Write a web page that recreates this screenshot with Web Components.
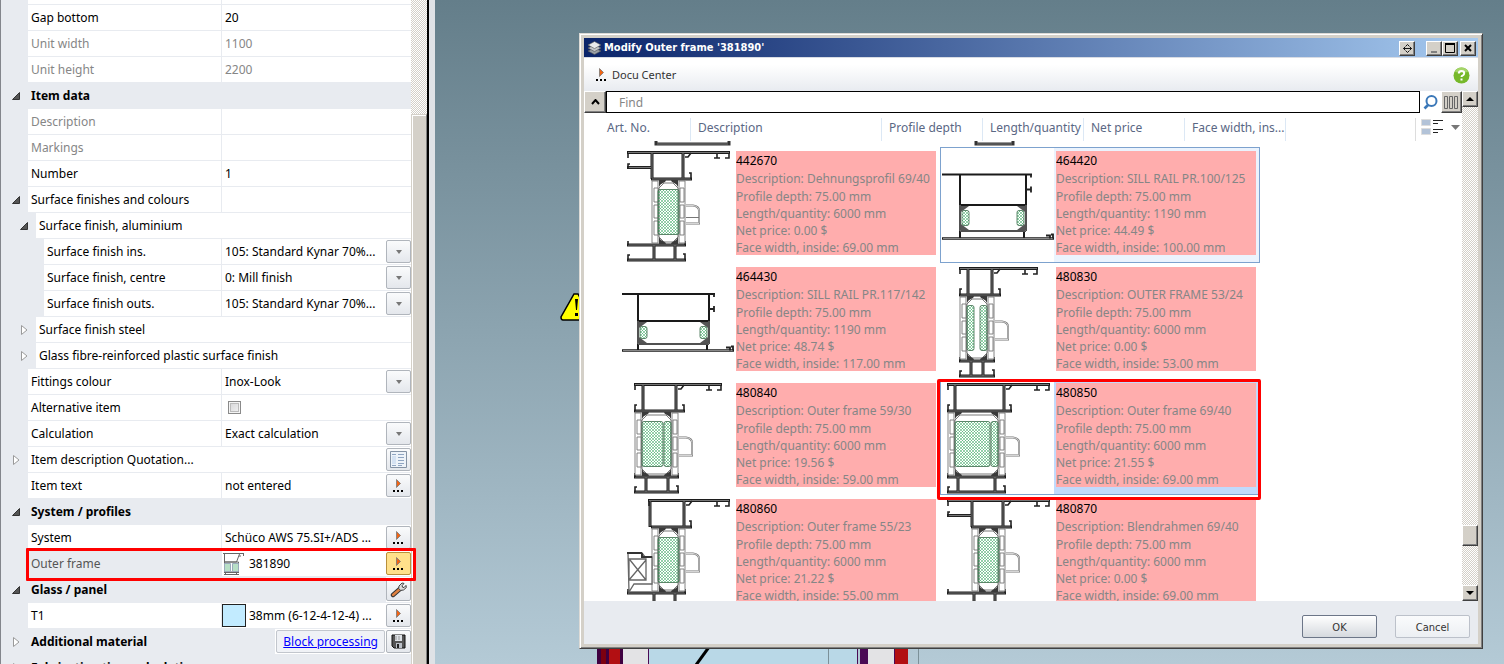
<!DOCTYPE html>
<html lang="en">
<head>
<meta charset="utf-8">
<title>Modify Outer frame</title>
<style>
html,body{margin:0;height:100%}
body{font:12px/16px "Noto Sans","Open Sans",sans-serif;color:#000;overflow:hidden;
--panel:#e8ebf0;--face:#d4d0c8;--dither:repeating-conic-gradient(#fff 0 25%,#d4d0c8 0 50%) 0 0/2px 2px}
</style>
</head>
<body>
<app-shell>
  <property-panel slot="side">
    <prop-row short type="text"></prop-row>
    <prop-row label="Gap bottom" type="text" value="20"></prop-row>
    <prop-row label="Unit width" type="text" value="1100" muted></prop-row>
    <prop-row label="Unit height" type="text" value="2200" muted></prop-row>
    <prop-row label="Item data" type="header" tree="open"></prop-row>
    <prop-row label="Description" type="text" muted></prop-row>
    <prop-row label="Markings" type="text" muted></prop-row>
    <prop-row label="Number" type="text" value="1"></prop-row>
    <prop-row label="Surface finishes and colours" type="cell" tree="open"></prop-row>
    <prop-row label="Surface finish, aluminium" type="group" tree="open" indent="1"></prop-row>
    <prop-row label="Surface finish ins." type="select" value="105: Standard Kynar 70%..." indent="2"></prop-row>
    <prop-row label="Surface finish, centre" type="select" value="0: Mill finish" indent="2"></prop-row>
    <prop-row label="Surface finish outs." type="select" value="105: Standard Kynar 70%..." indent="2"></prop-row>
    <prop-row label="Surface finish steel" type="group" tree="closed" indent="1"></prop-row>
    <prop-row label="Glass fibre-reinforced plastic surface finish" type="group" tree="closed" indent="1"></prop-row>
    <prop-row label="Fittings colour" type="select" value="Inox-Look"></prop-row>
    <prop-row label="Alternative item" type="check"></prop-row>
    <prop-row label="Calculation" type="select" value="Exact calculation"></prop-row>
    <prop-row label="Item description Quotation..." type="group" tree="closed"><icon-button slot="actions" icon="form" label="Edit quotation text"></icon-button></prop-row>
    <prop-row label="Item text" type="cell" value="not entered"><icon-button slot="actions" icon="more" label="Open item text"></icon-button></prop-row>
    <prop-row label="System / profiles" type="header" tree="open"></prop-row>
    <prop-row label="System" type="cell" value="Schüco AWS 75.SI+/ADS ..."><icon-button slot="actions" icon="more" label="Choose system"></icon-button></prop-row>
    <prop-row label="Outer frame" type="cell" value="381890" current>
      <mini-profile slot="lead"></mini-profile>
      <icon-button slot="actions" icon="more" label="Choose outer frame" active></icon-button>
    </prop-row>
    <prop-row label="Glass / panel" type="header" tree="open"><icon-button slot="actions" icon="wrench" label="Glass settings"></icon-button></prop-row>
    <prop-row label="T1" type="cell" value="38mm (6-12-4-12-4) ...">
      <colour-swatch slot="lead"></colour-swatch>
      <icon-button slot="actions" icon="more" label="Choose glass"></icon-button>
    </prop-row>
    <prop-row label="Additional material" type="header" tree="closed">
      <block-link slot="actions">Block processing</block-link>
      <icon-button slot="actions" icon="disk" label="Save"></icon-button>
    </prop-row>
    <prop-row label="Fabrication time calculation" type="header" tree="closed"></prop-row>
  </property-panel>
  <drawing-canvas>
    <modal-window heading="Modify Outer frame '381890'">
      <profile-list></profile-list>
    </modal-window>
  </drawing-canvas>
</app-shell>
<script>
const define=(name,html,setup)=>customElements.define(name,class extends HTMLElement{
  constructor(){super();this.attachShadow({mode:'open'});}
  connectedCallback(){this.shadowRoot.innerHTML=typeof html==='function'?html(this):html;if(setup)setup(this);}
});

const icons={
  more:'<svg width="13" height="14" viewBox="0 0 13 14"><path d="M4.500 .5v8l4-4z" fill="#f26414" stroke="#777" stroke-width=".8"/><path d="M1 11h2v2H1zM5 11h2v2H5zM9 11h2v2H9z"/></svg>',
  form:'<svg width="17" height="17" viewBox="0 0 17 17"><path d="M.5.5h16v16H.5z" fill="#eef3f9" stroke="#8593a5"/><path d="M2 3.500h4M2 14.500h4M8 3.500h6M8 6.500h6M8 9.500h6M8 12.500h6M8 14.500h4" stroke="#8fa5c2"/><path d="M2 5h4v8H2z" fill="#d5e2f2"/></svg>',
  wrench:'<svg width="17" height="16" viewBox="0 0 17 16"><path d="M3 13l8-7" stroke="#333" stroke-width="4.400" stroke-linecap="round"/><path d="M3 13l7-6" stroke="#e08040" stroke-width="2.400" stroke-linecap="round"/><path d="M9 4l3-3 2 .4-2 2.400.6 1.400 1.400.4L16 3.400l.3 2.200L13.500 8l-3 .4-1.800-2z" fill="#ddd" stroke="#444"/></svg>',
  disk:'<svg width="15" height="15" viewBox="0 0 15 15"><path d="M1 1h13v13H3l-2-2z" fill="#555" stroke="#111"/><path d="M4 1h7v6H4z" fill="#dfe3e8"/><path d="M5 2v4M8 2v4" stroke="#999"/><path d="M5 9h6v5H5z" fill="#bbc0c8"/><path d="M6 10h2v4H6z" fill="#222"/></svg>'
};

define('app-shell',`<style>:host{display:flex;height:100vh;overflow:hidden}
aside{flex:none;width:435px}main{flex:1;min-width:0;display:flex}</style>
<aside><slot name="side"></slot></aside><main><slot></slot></main>`);

define('property-panel',`<style>
:host{display:flex;height:100vh;box-sizing:border-box;border-left:1px solid #83868c;background:var(--panel);overflow:hidden}
.rows{flex:1;min-width:0}
.bar{width:16px;display:flex;flex-direction:column;background:var(--dither)}
.thumb{flex:1;margin-top:114px;background:var(--face);border:1px solid var(--face);border-right:1px solid #808080;border-bottom:0;box-shadow:inset 1px 1px #fff}
.edge{width:2px;background:#000}.rim{width:6px;background:#dfe2e6}
</style><div class="rows"><slot></slot></div><div class="bar"><div class="thumb"></div></div><div class="edge"></div><div class="rim"></div>`);

define('icon-button',el=>`<style>
:host{display:block;background:#fff;padding:1px 0}
button{display:flex;align-items:center;justify-content:center;width:25px;height:23px;padding:0;border:1px solid #b0b5bc;border-radius:2px;background:linear-gradient(#fafbfc,#e4e7ec)}
:host([active]) button{border-color:#b8903c;background:#ffe08a}
</style><button aria-label="${el.getAttribute('label')}">${icons[el.getAttribute('icon')]}</button>`);

define('block-link',`<style>
:host{display:block;background:#fff;padding:1px}
a{display:block;height:21px;line-height:22px;padding:0 6px;border:1px solid #c2c6cd;border-radius:2px;background:#f0f2f6;color:#00f;text-decoration:underline;white-space:nowrap}
</style><a href="#block"><slot></slot></a>`);

define('colour-swatch',`<style>:host{display:block;width:22px;height:21px;border:1px solid #222;background:#c2ebff;margin:1px 0}</style>`);
define('mini-profile',`<style>:host{display:block;width:24px;height:24px}</style>
<svg width="24" height="24" viewBox="0 0 24 24" fill="none" stroke="#666"><path d="M1 1.500h21M21.500 1v3M17 4h2M2.500 2v8h12l3-8M2.500 10h14v10h-14zM3.500 20v3M14.500 20v3M2 20.500h15M2 22.500h15"/><path d="M2.500 11.500h6v8h-6zM10.500 11.500h6v8h-6z" fill="#b8dfc6" stroke="#9ab"/></svg>`);

define('prop-row',el=>{
  const a=n=>el.getAttribute(n),type=a('type'),v=a('value')||'',lab=a('label')||'';
  const tree=a('tree')==='open'?'<svg width="8" height="8"><path d="M7.500 .5v7h-7z" fill="#555" stroke="#333"/></svg>':
    a('tree')==='closed'?'<svg width="7" height="10"><path d="M.5.5v9l5.500-4.500z" fill="#fff" stroke="#9a9a9a"/></svg>':'';
  let value='';
  if(type==='text')value=`<input class="box" id="f" value="${v}">`;
  if(type==='select')value=`<select id="f"><option>${v}</option></select><span class="drop"><svg width="6" height="4"><path d="M0 0h6L3 4z" fill="#777"/></svg></span>`;
  if(type==='check')value='<input type="checkbox" id="f">';
  if(type==='cell')value=`<slot name="lead"></slot><span class="text">${v}</span>`;
  const wide=type==='header'||type==='group';
  const labelled=['text','select','check'].includes(type);
  return `<style>
:host{display:flex;height:26px;--ind:0px}
:host([short]){height:5px;overflow:hidden}
:host([indent="1"]){--ind:8px}:host([indent="2"]){--ind:16px}
.gutter{flex:none;box-sizing:border-box;width:calc(27px + var(--ind));padding-right:8px;display:flex;align-items:center;justify-content:flex-end}
.row{flex:1;min-width:0;display:flex;height:100%;box-sizing:border-box;border-bottom:1px solid var(--panel);background:#fff;position:relative}
.name{flex:none;box-sizing:border-box;width:calc(194px - var(--ind));padding-left:3px;line-height:25px;border-right:1px solid var(--panel);white-space:nowrap}
.wide{width:auto;flex:1;border:0}
.val{flex:1;min-width:0;display:flex;align-items:center;position:relative}
:host([muted]) .name,:host([muted]) input{color:#868686}
:host([type=header]) .row{background:var(--panel)}
:host([type=header]) .name{font-weight:bold}
:host([current]) .name{background:var(--panel);color:#555}
input.box,select{font:inherit;color:inherit;border:0;margin:0;padding:0 3px;background:none;width:100%;height:24px;outline:0;appearance:none}
select{padding-right:26px}
.drop{position:absolute;right:0;top:1px;box-sizing:border-box;width:25px;height:23px;display:flex;align-items:center;justify-content:center;border:1px solid #b0b5bc;border-radius:2px;background:linear-gradient(#fafbfc,#e4e7ec);pointer-events:none}
.text{padding-left:3px;white-space:nowrap}
input[type=checkbox]{appearance:none;width:13px;height:13px;margin:0 6px;border:1px solid #8a8a8a;background:linear-gradient(135deg,#d4d4d6,#f4f4f4);box-shadow:inset 0 0 0 1px #f4f4f4,inset 0 0 0 2px #bbb}
.mark{position:absolute;left:-2px;top:-3px;right:-5px;height:27px;border:3px solid #f00;border-radius:1px;z-index:2;pointer-events:none}
.acts{display:flex;height:25px}
</style><div class="gutter">${tree}</div><div class="row">
<${labelled?'label for="f"':'div'} class="name${wide?' wide':''}">${lab}</${labelled?'label':'div'}>
${wide?'':`<div class="val">${value}</div>`}<div class="acts"><slot name="actions"></slot></div>
${el.hasAttribute('current')?'<div class="mark"></div>':''}</div>`;
});

define('drawing-canvas',`<style>
:host{display:block;flex:1;position:relative;overflow:hidden;background:linear-gradient(#647e8a,#b4cad6)}
.warn{position:absolute;left:125px;top:292px}
.window{position:absolute;left:162px;bottom:0}
::slotted(modal-window){position:absolute;left:144px;right:21px;top:33px;bottom:15px}
</style>
<svg class="warn" width="32" height="30" viewBox="0 0 32 30"><path d="M14 2h4l12 23q0 3-2 3H3q-2 0-2-3z" fill="#ff0" stroke="#000" stroke-width="1.500"/><path d="M15 7h3l-1 11h-1z"/><path d="M15 21h3v3h-3z"/></svg>
<svg class="window" width="323" height="17">
<path d="M0 0h26v17H0z" fill="#3f0040"/><path d="M4 0h5v17H4z" fill="#7c0010"/><path d="M12 0h11v17H12z" fill="#b20f12"/>
<path d="M26 0h25v17H26z" fill="#e3e3e5"/><path d="M52 0h208v17H52z" fill="#b9d8e7"/><path d="M51 0h1v17h-1zM260 0h1v17h-1zM263 0h48v17h-48z" fill="#4a0a55"/>
<path d="M231 0h1v17h-1zM321 0h1v17h-1z" fill="#7c9098"/><path d="M271 0h26v17h-26z" fill="#e3e3e5"/><path d="M298 0h13v17h-13z" fill="#b20f12"/><path d="M112 0L99 18" stroke="#000" stroke-width="3"/>
</svg><slot></slot>`);

define('modal-window',el=>`<style>
:host{display:flex;flex-direction:column;box-sizing:border-box;border:1px solid #dcdad6;border-right-color:#404040;border-bottom-color:#404040;
background:var(--face);box-shadow:inset 1px 1px #fff,inset -1px -1px #808080;padding:4px}
.title{display:flex;align-items:center;gap:2px;box-sizing:border-box;height:20px;padding:1px 2px 0 3px;border-bottom:1px solid #d8dce4;background:linear-gradient(90deg,#0a246a,#a6caf0);color:#fff}
.title b{flex:1;font:bold 11px/18px "DejaVu Sans Condensed","DejaVu Sans",sans-serif}
.title button{width:16px;height:15px;padding:0;border:1px solid;border-color:#fff #404040 #404040 #fff;background:var(--face);box-shadow:inset -1px -1px #808080;display:flex;align-items:center;justify-content:center}
.fit{margin-right:9px}.pair{display:flex}
.tools{display:flex;align-items:center;justify-content:space-between;height:33px;padding:1px 8px 0 12px;box-sizing:border-box;background:linear-gradient(#fff 20%,#e8ebf0)}
.tools .docu{display:flex;align-items:center;gap:5px;border:0;background:none;padding:0;font:inherit;font-size:11px;color:#333}
.tools .help{border:0;padding:0;width:17px;height:17px;background:none}
.foot{display:flex;justify-content:flex-end;gap:18px;height:43px;padding:0 8px;background:var(--panel)}
.foot button{width:75px;height:23px;border:1px solid #bcc1ca;border-radius:2px;background:linear-gradient(#fafbfc,#eceff3);font:11px "DejaVu Sans Condensed","DejaVu Sans",sans-serif;color:#333;padding:1px 0 0;margin-top:14px}
.foot .ok{border-color:#6c7688;background:linear-gradient(#fff,#d5d9de)}
.body{flex:1;min-height:0;display:flex}
::slotted(*){flex:1;min-width:0}
</style>
<div class="title"><svg width="15" height="14" viewBox="0 0 15 14"><g stroke="#555" stroke-width=".6"><path d="M1 10l6.500-3 6.500 3-6.500 3.600z" fill="#9aa0a6"/><path d="M1 7l6.500-3L14 7l-6.500 3.600z" fill="#c2c6ca"/><path d="M1 4l6.500-3.500L14 4 7.500 7.600z" fill="#e8eaec"/></g></svg>
<b>${el.getAttribute('heading')}</b>
<button class="fit" aria-label="Fit width"><svg width="9" height="9" viewBox="0 0 9 9" fill="none" stroke="#000" stroke-width=".9"><path d="M.5 4.500h8M2.500 2.500l-2 2 2 2M6.500 2.500l2 2-2 2M3 2l1.500-1.500L6 2M3 7l1.500 1.500L6 7"/></svg></button>
<span class="pair"><button aria-label="Minimise"><svg width="9" height="9"><path d="M1 7h6v2H1z" fill="#808080"/></svg></button>
<button aria-label="Maximise"><svg width="10" height="10"><path d="M.5 1v8.500h9V1z" fill="none" stroke="#000"/><path d="M0 0h10v2H0z"/></svg></button></span>
<button aria-label="Close"><svg width="8" height="8"><path d="M1 1l6 6M7 1L1 7" stroke="#000" stroke-width="2"/></svg></button></div>
<div class="tools"><button class="docu"><svg width="11" height="14" viewBox="1 0 11 14"><path d="M4.500 .5v8l4-4z" fill="#f26414" stroke="#777" stroke-width=".8"/><path d="M1 11h2v2H1zM5 11h2v2H5zM9 11h2v2H9z"/></svg>Docu Center</button>
<button class="help" aria-label="Help"><svg width="17" height="17" viewBox="0 0 17 17"><circle cx="8.500" cy="8.500" r="8" fill="#76b82a"/><path d="M2 5a7 7 0 0 1 13 0q-6 1-13 0z" fill="#a4d468"/><path d="M5.800 6.500q0-2.500 2.700-2.500t2.700 2.200q0 1.400-1.400 2.100-1.300.6-1.300 1.700" fill="none" stroke="#fff" stroke-width="2"/><path d="M7.500 11.500h2v2h-2z" fill="#fff"/></svg></button></div>
<div class="body"><slot></slot></div>
<div class="foot"><button class="ok">OK</button><button>Cancel</button></div>`);

/* Section drawings: a thermally broken frame and a sill rail. */
const hatch='<defs><pattern id="h" width="3" height="3" patternUnits="userSpaceOnUse"><path d="M0 0l3 3M3 0L0 3" stroke="#2ba257" stroke-width=".5"/></pattern></defs>';
const green=(x,y,w,h)=>`<rect x="${x}" y="${y}" width="${w}" height="${h}" rx="2" fill="url(#h)" stroke="#3b6b4a" stroke-width=".8"/>`;
function frame(p){
  const {L,R,a,b,v,hk,g,bv,flange,box}=p,fl=flange||box?7:L;
  let s=hatch;
  s+=`<g fill="none" stroke="#1c1c1c" stroke-width="3"><path d="M${a} 5.500h${b-a}M${v[0]+1} 5v27M${v[1]} 5v27M${L} 32h${hk-L}M${fl} 98h${R-fl}M${fl} 113h${R-fl}M${bv[0]+1} 98v15M${bv[1]} 98v15"/></g>`;
  s+=`<g fill="none" stroke="#777" stroke-width="1"><path d="M${a+1} 5.500h${b-a-2}M${v[0]+1} 6v25M${v[1]} 6v25M${L+1} 32h${hk-L-2}M${fl+1} 98h${R-fl-2}M${fl+1} 113h${R-fl-2}M${bv[0]+1} 98v15M${bv[1]} 98v15"/></g>`;
  s+=`<g fill="none" stroke="#222" stroke-width="1.600"><path d="M${b-13} 6v5M${b-16} 11h6M${b-1} 6v5h-4M${v[1]+2} 10h3l3-4M${hk-1} 32v-6h-2M${R-1} 98v-4M${R-1} 113v-6h-2M${fl+1} 113v-5h2M${fl+1} 98v-4M${a+1} 6v5"/>`;
  if(!flange&&!box)s+=`<path d="M${L+1} 32v-6h2"/>`;
  if(flange)s+=`<path d="M7 20.500h${L-7}" stroke-width="3"/><path d="M8 20.500h${L-8}" stroke="#777" stroke-width="1"/><path d="M8 21v-4h2"/>`;
  s+='</g>';
  const l=L+1,r=R-7;
  s+=`<g fill="#fff" stroke="#777" stroke-width=".9"><path d="M${l} 34h6v62h-6zM${r} 34h6v62h-6z"/><path d="M${l+2} 41h4v14h-4zM${l+2} 58h4v13h-4zM${l+2} 74h4v14h-4zM${r+1} 41h4v14h-4zM${r+1} 58h4v13h-4zM${r+1} 74h4v14h-4z"/></g>`;
  s+=`<path d="M${l+7} 33h7q0 2-3 3t-4 4zM${r-1} 33h-7q0 2 3 3t4 4zM${l+7} 97h7q0-2-3-3t-4-4zM${r-1} 97h-7q0-2 3-3t4-4z" fill="#3a3a3a"/>`;
  s+=`<path d="M${l+7} 41l5-5h${r-l-18}l5 5v49l-5 5h-${r-l-18}l-5-5z" fill="none" stroke="#555" stroke-width=".8"/>`;
  g.forEach(q=>s+=green(q[0],42.5,q[1],45));
  s+=`<path d="M${R} 58.500h7q6 1 6 5v13h-13" fill="none" stroke="#777" stroke-width="2"/><path d="M${R} 58.500h7q6 1 6 5v13h-13" fill="none" stroke="#eee" stroke-width=".8"/>`;
  if(p.rung)s+=`<path d="M${R} 70.500h13" stroke="#777"/>`;
  if(box)s+='<path d="M8 58h14l3 4h7v27H14l-5 8zM9 64h17v21H9zM10 65l16 20M26 65L9 85" fill="#fff" stroke="#666" stroke-width="1.300"/><path d="M7 58h15M22 58v4h10" stroke="#333" stroke-width="2" fill="none"/>';
  return s;
}
function sill(p){
  const {y0,v,x1,y1,y2,y3}=p,h=y2-y1;
  return hatch+`<g fill="none" stroke="#1a1a1a" stroke-width="2"><path d="M2 ${y0}h${x1-2}M${v[0]} ${y0}v${y3-y0}M${v[1]} ${y0}v${y2-y0}M${v[0]} ${y1}h${v[1]-v[0]}M${v[0]} ${y2}h${v[1]-v[0]}M${v[1]-2} ${y2}v${y3-y2}"/><path d="M2 ${y3}h112" stroke-width="2.500"/></g>
<path d="M${v[0]} ${y1}v${h}M${v[1]} ${y1}v${h}M${v[0]} ${y2}h${v[1]-v[0]}M3 ${y3}h110" stroke="#888" stroke-width="1" fill="none"/>
<path d="M${x1-1} ${y0}v3M${v[1]} ${y0+15}h5M${v[1]+5} ${y0+12}v6M106 ${y3-3}h4v3M113 ${y3}v-4h-2" fill="none" stroke="#222" stroke-width="1.800"/>
<path d="M${v[0]+1} ${y1+1}h8l-8 6zM${v[1]-1} ${y1+1}h-8l8 6zM${v[0]+1} ${y2-1}h8l-8-6zM${v[1]-1} ${y2-1}h-8l8-6z" fill="#555"/>`+
  green(v[0]+2,y1+5.5,7,h-11)+green(v[1]-9,y1+5.5,7,h-11);
}
const items=[
 {no:'442670',d:'Dehnungsprofil 69/40',q:6000,p:'0.00',w:'69.00',svg:frame({L:31,R:66,a:7,b:110,v:[31,63],hk:72,g:[[38,21]],bv:[33,55],flange:1,rung:1})},
 {no:'464420',d:'SILL RAIL PR.100/125',q:1190,p:'44.49',w:'100.00',state:'hover',svg:sill({y0:27.5,v:[20,86],x1:92,y1:58,y2:84,y3:91.5})},
 {no:'464430',d:'SILL RAIL PR.117/142',q:1190,p:'48.74',w:'117.00',svg:sill({y0:31,v:[18,89],x1:95,y1:58,y2:81,y3:87.5})},
 {no:'480830',d:'OUTER FRAME 53/24',q:6000,p:'0.00',w:'53.00',svg:frame({L:19,R:55,a:19,b:98,v:[27,52],hk:61,g:[[27,7],[40,7]],bv:[30,43]})},
 {no:'480840',d:'Outer frame 59/30',q:6000,p:'19.56',w:'59.00',svg:frame({L:14,R:59,a:14,b:102,v:[22,56],hk:65,g:[[22,21],[44,7]],bv:[25,48]})},
 {no:'480850',d:'Outer frame 69/40',q:6000,p:'21.55',w:'69.00',state:'selected',svg:frame({L:7,R:66,a:7,b:110,v:[14,64],hk:72,g:[[15,35],[51,7]],bv:[17,55]})},
 {no:'480860',d:'Outer frame 55/23',q:6000,p:'21.22',w:'55.00',svg:frame({L:31,R:66,a:28,b:110,v:[29,64],hk:72,g:[[38,21]],bv:[33,55],box:1})},
 {no:'480870',d:'Blendrahmen 69/40',q:6000,p:'0.00',w:'69.00',svg:frame({L:31,R:66,a:7,b:110,v:[31,63],hk:72,g:[[38,21]],bv:[33,55],flange:1})}
];

define('profile-card',el=>{const i=items[el.dataset.i];return `<style>
:host{display:flex;height:116px;box-sizing:border-box;width:320px;border:1px solid transparent;position:relative}
:host([state=hover]){border-color:#7da2ce;background:#ebf3fd}
:host([state=selected]){border-color:#7da2ce;background:#c1dafc}
.pic{flex:none;width:113px;height:114px;background:#fff}
svg{display:block;margin:-1px 0 0 -1px;overflow:hidden}
.info{box-sizing:border-box;margin:3px 0 0 2px;padding-top:1px;width:200px;height:104px;background:#ffadad;color:#868686;overflow:hidden;white-space:nowrap;line-height:17px}
.info div:nth-child(-n+2){line-height:18px}.info .no{color:#000}
.mark{position:absolute;left:-4px;top:-1px;right:-2px;bottom:-6px;border:3px solid #f00;border-radius:2px;z-index:2}
</style><div class="pic"><svg width="115" height="116">${i.svg}</svg></div><div class="info"><div class="no">${i.no}</div><div>Description: ${i.d}</div><div>Profile depth: 75.00 mm</div><div>Length/quantity: ${i.q} mm</div><div>Net price: ${i.p} $</div><div>Face width, inside: ${i.w} mm</div></div>
${i.state==='selected'?'<div class="mark"></div>':''}`;},el=>{const s=items[el.dataset.i].state;if(s)el.setAttribute('state',s);});

define('scroll-bar',`<style>
:host{display:flex;flex-direction:column;flex:none;width:16px;background:var(--dither)}
button,.thumb{box-sizing:border-box;width:16px;height:16px;padding:0;border:1px solid;border-color:#fff #404040 #404040 #fff;background:var(--face);box-shadow:inset -1px -1px #808080;display:flex;align-items:center;justify-content:center}
.thumb{height:21px}.before{flex:418}.after{flex:39}
</style><button aria-label="Scroll up"><svg width="8" height="4"><path d="M4 0l4 4H0z"/></svg></button><div class="before"></div><div class="thumb"></div><div class="after"></div><button aria-label="Scroll down"><svg width="8" height="4"><path d="M0 0h8L4 4z"/></svg></button>`);

define('profile-list',`<style>
:host{display:flex;min-height:0;background:#fff}
.main{flex:1;min-width:0;display:flex;flex-direction:column}
.search{display:flex;height:22px}
.search input{flex:1;min-width:0;box-sizing:border-box;height:22px;border:1px solid #000;padding:0 12px;font:inherit;outline:0}
.search input::placeholder{color:#868686;opacity:1}
.search button{box-sizing:border-box;height:22px;padding:0;display:flex;align-items:center;justify-content:center;background:var(--face);border:1px solid;border-color:#fff #404040 #404040 #fff;box-shadow:inset -1px -1px #808080}
.search .up{width:22px}.search .cols{width:21px}.search .go{width:21px;background:#fff;border:0;box-shadow:none}
.heads{display:flex;height:28px;padding:5px 0 0 15px;box-sizing:border-box}
.heads button{flex:none;box-sizing:border-box;width:101px;height:23px;padding:0 0 4px 7px;border:0;border-right:1px solid #dce8f5;background:none;font:inherit;color:#5a6784;text-align:left;white-space:nowrap;overflow:hidden}
.heads button:nth-child(1){width:92px;padding-left:8px}.heads button:nth-child(2){width:191px}
.heads .view{margin-left:auto;width:47px;display:flex;align-items:center;gap:8px;border:0;border-left:1px solid #ddd;padding:0 0 4px 5px}
.clip{flex:1;min-height:0;overflow:hidden}
.tail{height:6px;display:flex;padding-left:36px}
.grid{display:grid;grid-template-columns:320px 320px;padding-left:36px}
</style>
<div class="main">
<div class="search"><button class="up" aria-label="Collapse"><svg width="9" height="6"><path d="M1 5l3.500-4L8 5" fill="none" stroke="#000" stroke-width="2"/></svg></button>
<input type="text" placeholder="Find" aria-label="Find">
<button class="go" aria-label="Search"><svg width="15" height="15" viewBox="0 0 15 15" fill="none" stroke="#3b78b8"><circle cx="8.500" cy="6" r="5" stroke-width="2"/><path d="M5.500 9.500L1.500 13.500" stroke-width="2.600"/></svg></button>
<button class="cols" aria-label="Columns"><svg width="15" height="13" fill="none" stroke="#666"><path d="M.5.5h3v12h-3zM5.500.5h3v12h-3zM10.500.5h3v12h-3z"/></svg></button></div>
<div class="heads"><button>Art. No.</button><button>Description</button><button>Profile depth</button><button>Length/quantity</button><button>Net price</button><button>Face width, ins...</button>
<button class="view" aria-label="View"><svg width="22" height="17" viewBox="0 0 22 17"><path d="M.5.5h9v6h-9zM.5 9.500h9v6h-9z" fill="#b3c3d8" stroke="#ddd"/><path d="M12 1.500h10M12 4.500h5M12 10.500h10M12 13.500h5" stroke="#222"/></svg><svg width="9" height="5"><path d="M0 0h9L4.500 5z" fill="#777"/></svg></button></div>
<div class="clip"><div class="tail"><svg width="640" height="6"><path d="M36 0v3h73V0M356 0v3h37V0" fill="none" stroke="#333" stroke-width="3"/><path d="M37 3h71M357 3h35" stroke="#777"/></svg></div>
<div class="grid">${items.map((_,n)=>`<profile-card data-i="${n}"></profile-card>`).join('')}</div></div>
</div><scroll-bar></scroll-bar>`);
</script>
</body>
</html>
